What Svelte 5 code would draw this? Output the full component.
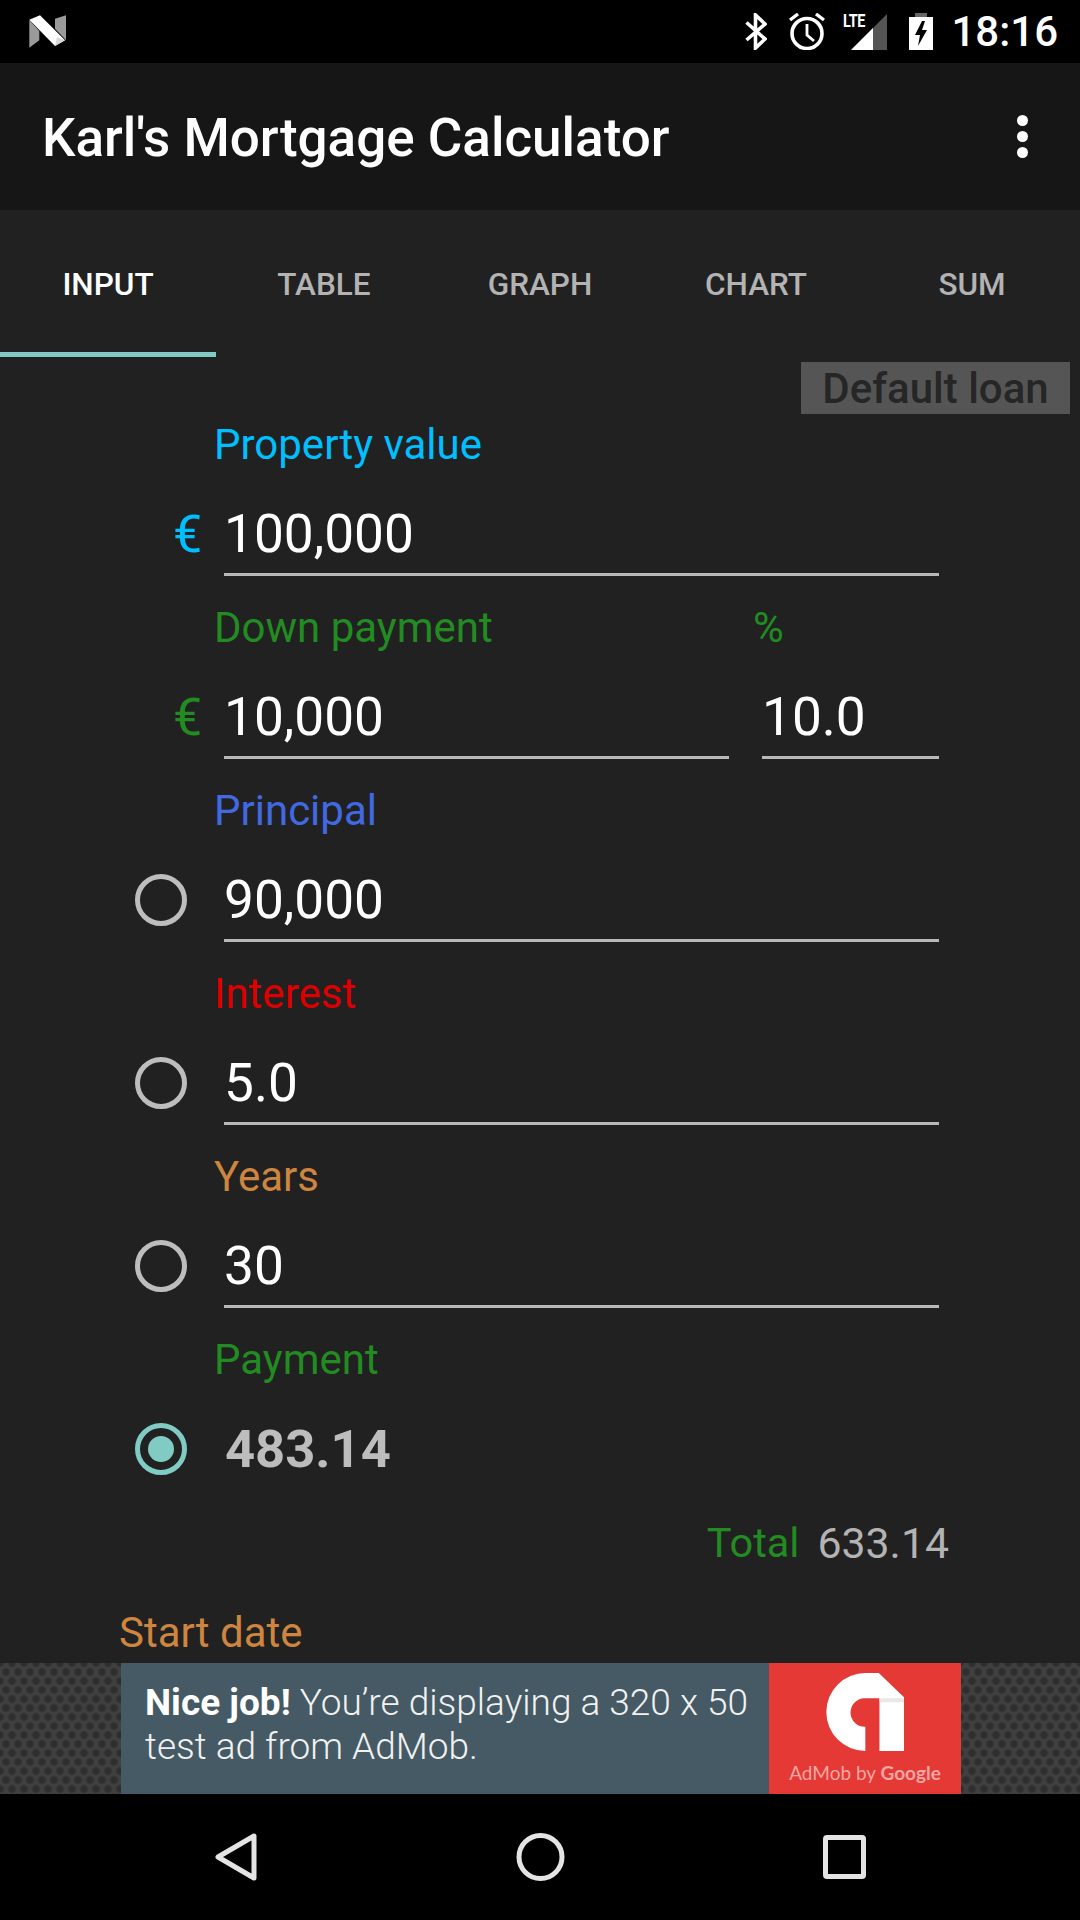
<script>
  const tabs = ["INPUT", "TABLE", "GRAPH", "CHART", "SUM"];
  let active = 0;

  const fields = [
    { label: "Property value", value: "100,000", color: "sky", slot: "euro" },
    { label: "Down payment", value: "10,000", color: "green", slot: "euro", pct: "10.0" },
    { label: "Principal", value: "90,000", color: "blue", slot: "radio" },
    { label: "Interest", value: "5.0", color: "red", slot: "radio" },
    { label: "Years", value: "30", color: "peru", slot: "radio" },
    { label: "Payment", value: "483.14", color: "green", slot: "checked" }
  ];
</script>

<div class="screen">
  <div class="status">
    <svg class="n-logo" viewBox="0 0 38 33" width="38" height="33">
      <polygon points="0.3,5 10.3,16 10.3,25.3 0.3,32.7" fill="#9a9a9a" />
      <polygon points="26,3.7 37,0.3 37,25.3 26,13.7" fill="#9a9a9a" />
      <polygon points="0.3,4.7 11,0.3 36,25.3 26,31" fill="#fff" />
      <polygon points="28,22 36,25.3 26,31" fill="#d8d8d8" />
    </svg>
    <div class="status-icons">
      <svg class="bt" viewBox="0 0 22 37" width="22" height="37">
        <path d="M1.5 9.5 L20 26 L10.5 35 V2 L20 11 L1.5 27" fill="none" stroke="#fff" stroke-width="3.6" />
      </svg>
      <svg class="alarm" viewBox="0 0 36 37" width="36" height="37">
        <circle cx="18" cy="20.5" r="15" fill="none" stroke="#fff" stroke-width="3.6" />
        <path d="M18 11 V22 L25 28" fill="none" stroke="#fff" stroke-width="2.8" />
        <path d="M1 7 L9 1 M35 7 L27 1" fill="none" stroke="#fff" stroke-width="3.4" />
      </svg>
      <div class="signal">
        <span class="lte">LTE</span>
        <svg viewBox="0 0 36 36" width="36" height="36">
          <polygon points="0,36 36,0 36,36" fill="#555" />
          <polygon points="0,36 22,14 22,36" fill="#fff" />
        </svg>
      </div>
      <svg class="battery" viewBox="0 0 24 37" width="24" height="37">
        <rect x="6" y="0" width="12" height="4" fill="#666" />
        <rect x="0" y="4" width="24" height="33" fill="#fff" />
        <polygon points="13,8 6,22 11,22 9,33 18,17 13,17 16,8" fill="#000" />
      </svg>
      <span class="time">18:16</span>
    </div>
  </div>

  <header class="toolbar">
    <h1>Karl's Mortgage Calculator</h1>
    <div class="more"><i></i><i></i><i></i></div>
  </header>

  <nav class="tabs">
    {#each tabs as tab, i}
      <button class="tab" class:active={i === active} on:click={() => (active = i)}>{tab}</button>
    {/each}
  </nav>

  <main class="content">
    <div class="actions">
      <button class="default-loan">Default loan</button>
    </div>

    {#each fields as f}
      <section class="field">
        <div class="labels">
          <span class="label {f.color}">{f.label}</span>
          {#if f.pct}<span class="label pct-label {f.color}">%</span>{/if}
        </div>
        <div class="inputs">
          <div class="slot">
            {#if f.slot === "euro"}
              <span class="euro {f.color}">€</span>
            {:else}
              <span class="radio" class:checked={f.slot === "checked"}></span>
            {/if}
          </div>
          <div class="input" class:result={f.slot === "checked"}>{f.value}</div>
          {#if f.pct}<div class="input pct">{f.pct}</div>{/if}
        </div>
      </section>
    {/each}

    <div class="total">
      <span class="label green">Total</span>
      <span class="total-value">633.14</span>
    </div>
    <div class="start-date label peru">Start date</div>
  </main>

  <div class="ad-strip">
    <div class="ad">
      <p class="ad-text"><b>Nice job!</b> You’re displaying a 320 x 50 test ad from AdMob.</p>
      <div class="ad-brand">
        <svg viewBox="258 68 232 232" width="78" height="78">
          <path d="M375 68 H415 L490 140 V300 H417 V143 H372 A42 42 0 0 0 375 228 V300 A116 116 0 0 1 375 68 Z" fill="#fff" />
          <rect x="417" y="143" width="73" height="12" fill="#e8e8e8" />
        </svg>
        <span class="ad-by">AdMob by <em>Google</em></span>
      </div>
    </div>
  </div>

  <footer class="navbar">
    <svg viewBox="0 0 42 48" width="42" height="48">
      <polygon points="39,3 39,45 3,24" fill="none" stroke="#e4e4e4" stroke-width="5" stroke-linejoin="round" />
    </svg>
    <svg viewBox="0 0 49 48" width="49" height="48">
      <circle cx="24.5" cy="24" r="21.5" fill="none" stroke="#e4e4e4" stroke-width="5" />
    </svg>
    <svg viewBox="0 0 43 44" width="43" height="44">
      <rect x="2.5" y="2.5" width="38" height="39" rx="1.5" fill="none" stroke="#e4e4e4" stroke-width="5" />
    </svg>
  </footer>
</div>

<style>
  :global(body) {
    margin: 0;
    background: #212121;
  }
  .screen {
    width: 1080px;
    height: 1920px;
    display: flex;
    flex-direction: column;
    overflow: hidden;
    background: #212121;
    font-family: Roboto, "Liberation Sans", sans-serif;
    color: #fff;
  }

  /* status bar */
  .status {
    height: 63px;
    flex: none;
    background: #000;
    display: flex;
    align-items: center;
    justify-content: space-between;
    padding: 0 22px 0 29px;
  }
  .status-icons {
    display: flex;
    align-items: center;
  }
  .bt {
    margin-right: 22px;
  }
  .alarm {
    margin-right: 18px;
  }
  .signal {
    position: relative;
    width: 44px;
    height: 37px;
    display: flex;
    justify-content: flex-end;
    align-items: flex-end;
    margin-right: 22px;
  }
  .lte {
    position: absolute;
    left: 0;
    top: -1px;
    font-size: 18px;
    font-weight: 700;
    line-height: 18px;
    letter-spacing: -0.5px;
    transform: scaleX(0.8);
    transform-origin: left top;
  }
  .battery {
    margin-right: 18px;
  }
  .time {
    font-size: 42px;
    font-weight: 500;
    line-height: 48px;
  }

  /* toolbar */
  .toolbar {
    height: 147px;
    flex: none;
    background: #161616;
    display: flex;
    align-items: center;
    justify-content: space-between;
    padding: 0 52px 0 42px;
  }
  h1 {
    margin: 0;
    padding-top: 3px;
    font-size: 53px;
    font-weight: 500;
    line-height: 64px;
  }
  .more {
    display: flex;
    flex-direction: column;
    gap: 5px;
  }
  .more i {
    display: block;
    width: 11px;
    height: 11px;
    border-radius: 50%;
    background: #fff;
  }

  /* tabs */
  .tabs {
    display: flex;
    flex: none;
    height: 147px;
  }
  .tab {
    width: 216px;
    border: none;
    border-bottom: 5px solid transparent;
    padding: 7px 0 0;
    background: none;
    font: 500 31.5px Roboto, sans-serif;
    color: #b3b3b3;
  }
  .tab.active {
    color: #fff;
    border-bottom-color: #80cbc4;
  }

  /* form */
  .content {
    flex: none;
    height: 1306px;
    overflow: hidden;
  }
  .actions {
    height: 36px;
    display: flex;
    justify-content: flex-end;
    align-items: flex-start;
    padding: 5px 10px 0 0;
    box-sizing: border-box;
  }
  .default-loan {
    width: 269px;
    height: 52px;
    border: none;
    padding: 0;
    background: #555;
    color: #262626;
    font: 500 42px Roboto, sans-serif;
    position: relative;
  }
  .field {
    height: 183px;
    padding-top: 26px;
    box-sizing: border-box;
  }
  .labels {
    height: 52px;
    display: flex;
    padding-left: 214px;
  }
  .label {
    font-size: 42px;
    line-height: 52px;
  }
  .pct-label {
    position: absolute;
    left: 753px;
  }
  .inputs {
    display: flex;
    width: 939px;
    align-items: flex-end;
  }
  .slot {
    width: 224px;
    flex: none;
    height: 105px;
    position: relative;
  }
  .euro {
    position: absolute;
    left: 173px;
    top: 34px;
    font-size: 52px;
    line-height: 60px;
  }
  .radio {
    position: absolute;
    left: 135px;
    top: 37px;
    width: 52px;
    height: 52px;
    box-sizing: border-box;
    border: 5px solid #bdbdbd;
    border-radius: 50%;
  }
  .radio.checked {
    border-color: #80cbc4;
  }
  .radio.checked::after {
    content: "";
    position: absolute;
    left: 8px;
    top: 8px;
    width: 26px;
    height: 26px;
    border-radius: 50%;
    background: #80cbc4;
  }
  .input {
    flex: 1;
    padding: 33px 0 9px 0;
    border-bottom: 3px solid #b8b8b8;
    font-size: 53.2px;
    line-height: 60px;
  }
  .input.pct {
    flex: none;
    width: 177px;
    margin-left: 33px;
  }
  .input.result {
    border-bottom-color: transparent;
    font-weight: 700;
    color: #bdbdbd;
    font-size: 52.5px;
    padding-left: 1px;
  }
  .sky { color: #00bfff; }
  .green { color: #228b22; }
  .blue { color: #4169e1; }
  .red { color: #dd0000; }
  .peru { color: #cd853f; }

  .total {
    margin-top: 26px;
    width: 949px;
    display: flex;
    justify-content: flex-end;
    gap: 18px;
  }
  .total .label {
    font-size: 41.5px;
  }
  .total-value {
    font-size: 42.8px;
    line-height: 52px;
    color: #b3b3b3;
  }
  .start-date {
    margin-top: 38px;
    padding-left: 119px;
  }

  /* ad */
  .ad-strip {
    height: 131px;
    flex: none;
    display: flex;
    justify-content: center;
    padding-left: 2px;
    box-sizing: border-box;
    background-color: #404040;
    background-image:
      radial-gradient(circle, #2e2e2e 0 2.5px, transparent 5px),
      radial-gradient(circle, #2e2e2e 0 2.5px, transparent 5px);
    background-size: 12px 18px;
    background-position: 0 0, 6px 9px;
  }
  .ad {
    width: 840px;
    display: flex;
    background: #455a64;
  }
  .ad-text {
    width: 648px;
    flex: none;
    margin: 0;
    padding: 18px 0 0 24px;
    box-sizing: border-box;
    font-size: 37px;
    font-weight: 300;
    line-height: 44px;
    color: #f1f1f1;
  }
  .ad-text b {
    font-weight: 700;
    color: #fff;
  }
  .ad-brand {
    flex: 1;
    background: #e53935;
    display: flex;
    flex-direction: column;
    align-items: center;
    padding-top: 10px;
  }
  .ad-by {
    font-family: Lato, sans-serif;
    font-size: 19px;
    line-height: 26px;
    margin-top: 9px;
    color: #f6a6a4;
  }
  .ad-by em {
    font-style: normal;
    font-weight: 700;
  }

  /* navigation bar */
  .navbar {
    flex: none;
    height: 126px;
    background: #000;
    display: grid;
    grid-template-columns: repeat(3, 304.5px);
    justify-content: center;
    justify-items: center;
    align-items: center;
  }
</style>
